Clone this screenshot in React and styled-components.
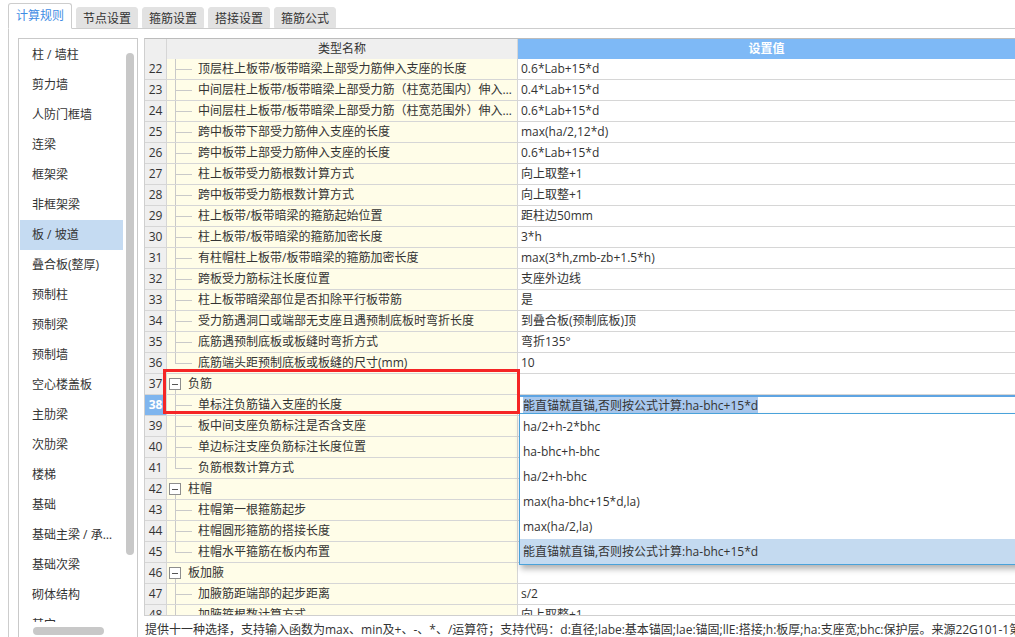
import React from 'react'
import styled, { createGlobalStyle } from 'styled-components'

const GlobalStyle = createGlobalStyle`
    body {
        margin: 0;
        background: #fff;
        font-family: "Open Sans", "Noto Sans CJK SC", sans-serif;
        font-size: 12px;
        color: #333;
    }
`

const tabs = ['计算规则', '节点设置', '箍筋设置', '搭接设置', '箍筋公式']

const sideItems = [
    '柱 / 墙柱', '剪力墙', '人防门框墙', '连梁', '框架梁', '非框架梁', '板 / 坡道',
    '叠合板(整厚)', '预制柱', '预制梁', '预制墙', '空心楼盖板', '主肋梁', '次肋梁',
    '楼梯', '基础', '基础主梁 / 承台梁', '基础次梁', '砌体结构', '其它'
]

const rows = [
    { n: 22, name: '顶层柱上板带/板带暗梁上部受力筋伸入支座的长度', value: '0.6*Lab+15*d' },
    { n: 23, name: '中间层柱上板带/板带暗梁上部受力筋（柱宽范围内）伸入支座的长度', value: '0.4*Lab+15*d' },
    { n: 24, name: '中间层柱上板带/板带暗梁上部受力筋（柱宽范围外）伸入支座的长度', value: '0.6*Lab+15*d' },
    { n: 25, name: '跨中板带下部受力筋伸入支座的长度', value: 'max(ha/2,12*d)' },
    { n: 26, name: '跨中板带上部受力筋伸入支座的长度', value: '0.6*Lab+15*d' },
    { n: 27, name: '柱上板带受力筋根数计算方式', value: '向上取整+1' },
    { n: 28, name: '跨中板带受力筋根数计算方式', value: '向上取整+1' },
    { n: 29, name: '柱上板带/板带暗梁的箍筋起始位置', value: '距柱边50mm' },
    { n: 30, name: '柱上板带/板带暗梁的箍筋加密长度', value: '3*h' },
    { n: 31, name: '有柱帽柱上板带/板带暗梁的箍筋加密长度', value: 'max(3*h,zmb-zb+1.5*h)' },
    { n: 32, name: '跨板受力筋标注长度位置', value: '支座外边线' },
    { n: 33, name: '柱上板带暗梁部位是否扣除平行板带筋', value: '是' },
    { n: 34, name: '受力筋遇洞口或端部无支座且遇预制底板时弯折长度', value: '到叠合板(预制底板)顶' },
    { n: 35, name: '底筋遇预制底板或板缝时弯折方式', value: '弯折135°' },
    { n: 36, name: '底筋端头距预制底板或板缝的尺寸(mm)', value: '10', kind: 'last' },
    { n: 37, name: '负筋', value: '', kind: 'group' },
    { n: 38, name: '单标注负筋锚入支座的长度', value: '能直锚就直锚,否则按公式计算:ha-bhc+15*d', selected: true },
    { n: 39, name: '板中间支座负筋标注是否含支座', value: '' },
    { n: 40, name: '单边标注支座负筋标注长度位置', value: '' },
    { n: 41, name: '负筋根数计算方式', value: '', kind: 'last' },
    { n: 42, name: '柱帽', value: '', kind: 'group' },
    { n: 43, name: '柱帽第一根箍筋起步', value: '' },
    { n: 44, name: '柱帽圆形箍筋的搭接长度', value: '' },
    { n: 45, name: '柱帽水平箍筋在板内布置', value: '', kind: 'last' },
    { n: 46, name: '板加腋', value: '', kind: 'group' },
    { n: 47, name: '加腋筋距端部的起步距离', value: 's/2' },
    { n: 48, name: '加腋箍根数计算方式', value: '向上取整+1' },
]

const options = [
    'ha/2+h-2*bhc',
    'ha-bhc+h-bhc',
    'ha/2+h-bhc',
    'max(ha-bhc+15*d,la)',
    'max(ha/2,la)',
    '能直锚就直锚,否则按公式计算:ha-bhc+15*d',
]

const App = () => {
    return (
        <Page>
            <GlobalStyle />
            <TabBar>
                {tabs.map((t, i) => (
                    <Tab key={t} active={i === 0}>{t}</Tab>
                ))}
            </TabBar>

            <Pane>
                <SideBox>
                    <ListArea>
                        <ItemList>
                            {sideItems.map(item => (
                                <SideItem key={item} selected={item === '板 / 坡道'}>{item}</SideItem>
                            ))}
                        </ItemList>
                        <VTrack><VThumb /></VTrack>
                    </ListArea>
                    <HTrack><HThumb /></HTrack>
                </SideBox>

                <Main>
                    <TableWrap>
                        <HeadRow>
                            <NumHead />
                            <NameHead>类型名称</NameHead>
                            <ValueHead>设置值</ValueHead>
                        </HeadRow>
                        {rows.map(r => (
                            <Row key={r.n}>
                                <NumCell selected={r.selected}>{r.n}</NumCell>
                                {r.kind === 'group' ? (
                                    <NameCell group>
                                        <ToggleCol><Toggle /></ToggleCol>
                                        <GroupText>{r.name}</GroupText>
                                    </NameCell>
                                ) : (
                                    <NameCell>
                                        <Branch last={r.kind === 'last'} />
                                        <NameText>{r.name}</NameText>
                                    </NameCell>
                                )}
                                <ValueCell>
                                    {r.selected ? (
                                        <>
                                            <Editor><Picked>{r.value}</Picked></Editor>
                                            <Dropdown>
                                                {options.map((o, i) => (
                                                    <Option key={o} active={i === options.length - 1}>{o}</Option>
                                                ))}
                                            </Dropdown>
                                        </>
                                    ) : r.value}
                                </ValueCell>
                            </Row>
                        ))}
                    </TableWrap>
                    <Status>
                        提供十一种选择，支持输入函数为max、min及+、-、*、/运算符；支持代码：d:直径;labe:基本锚固;lae:锚固;llE:搭接;h:板厚;ha:支座宽;bhc:保护层。来源22G101-1第2-54页
                    </Status>
                </Main>
            </Pane>

            <RedMark />
        </Page>
    )
}

// Styled Components

const Page = styled.div`
    position: relative;
    width: 1015px;
    height: 637px;
    overflow: hidden;
`

const TabBar = styled.div`
    display: flex;
    align-items: flex-end;
    gap: 4px;
    height: 28px;
    margin-left: 8px;
    border-bottom: 1px solid #cdcdcd;
`

const Tab = styled.div`
    box-sizing: border-box;
    height: ${p => p.active ? '26px' : '21px'};
    padding: 0 ${p => p.active ? '7px' : '6px'};
    margin-bottom: ${p => p.active ? '-1px' : '0'};
    line-height: ${p => p.active ? '24px' : '21px'};
    background: ${p => p.active ? '#fff' : '#e2e2e2'};
    color: ${p => p.active ? '#3f8de4' : '#333'};
    border: 1px solid ${p => p.active ? '#cdcdcd' : '#e2e2e2'};
    border-bottom-color: ${p => p.active ? '#fff' : '#e2e2e2'};
    border-radius: 3px 3px 0 0;
    white-space: nowrap;
`

const Pane = styled.div`
    display: flex;
    align-items: flex-start;
    gap: 6px;
    margin-left: 8px;
    padding: 9px 0 0 9px;
    border-left: 1px solid #cdcdcd;
    height: 640px;
`

const SideBox = styled.div`
    flex: none;
    width: 120px;
    height: 620px;
    box-sizing: border-box;
    border: 1px solid #c9c9c9;
    background: #fff;
    overflow: hidden;
`

const ListArea = styled.div`
    display: flex;
    height: 583px;
    overflow: hidden;
`

const ItemList = styled.div`
    width: 103px;
    margin-left: 1px;
    padding-top: 1px;
`

const SideItem = styled.div`
    height: 30px;
    line-height: 30px;
    padding-left: 12px;
    white-space: nowrap;
    overflow: hidden;
    text-overflow: ellipsis;
    background: ${p => p.selected ? '#c5dbf2' : 'transparent'};
    color: #333;
`

const VTrack = styled.div`
    width: 8px;
    margin-left: 3px;
    padding-top: 14px;
`

const VThumb = styled.div`
    width: 8px;
    height: 502px;
    border-radius: 4px;
    background: #c8c8c8;
`

const HTrack = styled.div`
    height: 15px;
    padding: 5px 0 0 14px;
    box-sizing: border-box;
`

const HThumb = styled.div`
    width: 71px;
    height: 8px;
    border-radius: 4px;
    background: #c8c8c8;
`

const Main = styled.div`
    flex: 1;
    min-width: 0;
    display: flex;
    flex-direction: column;
`

const TableWrap = styled.div`
    height: 578px;
    box-sizing: border-box;
    border-top: 1px solid #bcbcbc;
    border-bottom: 1px solid #cfcfcf;
    border-left: 1px solid #cfcfcf;
    overflow: hidden;
`

const HeadRow = styled.div`
    display: grid;
    grid-template-columns: 22px 351px 1fr;
    height: 20px;
    line-height: 20px;
`

const NumHead = styled.div`
    background: #efefef;
    border-right: 1px solid #d6d6d6;
`

const NameHead = styled.div`
    background: #efefef;
    border-right: 1px solid #d6d6d6;
    text-align: center;
    color: #333;
`

const ValueHead = styled.div`
    box-sizing: border-box;
    background: #7eb9f6;
    border-bottom: 1px solid #68a8ee;
    color: #fff;
    font-weight: 700;
    text-align: center;
`

const Row = styled.div`
    display: grid;
    grid-template-columns: 22px 351px 1fr;
    height: 21px;
`

const NumCell = styled.div`
    box-sizing: border-box;
    border-right: 1px solid #d6d6d6;
    border-bottom: 1px solid #d6d6d6;
    background: ${p => p.selected ? '#7fb5ee' : '#efefef'};
    color: ${p => p.selected ? '#fff' : '#333'};
    font-weight: ${p => p.selected ? 700 : 400};
    line-height: 20px;
    text-align: center;
`

const NameCell = styled.div`
    box-sizing: border-box;
    display: flex;
    align-items: stretch;
    min-width: 0;
    padding-left: ${p => p.group ? '2px' : '8px'};
    background: #fffde8;
    border-right: 1px solid #d6d6d6;
    border-bottom: 1px solid #d6d6d6;
    line-height: 20px;
`

const Branch = styled.div`
    flex: none;
    width: 17px;
    background:
        linear-gradient(#c9c9c9, #c9c9c9) left top / 1px ${p => p.last ? '50%' : '100%'} no-repeat,
        linear-gradient(#c9c9c9, #c9c9c9) left 10px / 17px 1px no-repeat;
`

const NameText = styled.div`
    margin-left: 6px;
    white-space: nowrap;
    overflow: hidden;
    text-overflow: ellipsis;
    padding-right: 2px;
`

const ToggleCol = styled.div`
    flex: none;
    width: 12px;
    display: flex;
    align-items: center;
    background: linear-gradient(#c9c9c9, #c9c9c9) 6px 100% / 1px 50% no-repeat;
`

const Toggle = styled.div`
    box-sizing: border-box;
    width: 12px;
    height: 12px;
    border: 1px solid #8d8d8d;
    background: linear-gradient(#555, #555) center / 6px 1px no-repeat, #fff;
`

const GroupText = styled.div`
    margin-left: 7px;
    white-space: nowrap;
`

const ValueCell = styled.div`
    position: relative;
    box-sizing: border-box;
    padding-left: 3px;
    border-bottom: 1px solid #d6d6d6;
    background: #fff;
    line-height: 20px;
    white-space: nowrap;
    overflow: visible;
`

const Editor = styled.div`
    box-sizing: border-box;
    height: 20px;
    margin-left: -2px;
    padding-left: 3px;
    border-top: 2px solid #5ea4e2;
    border-left: 1px solid #5ea4e2;
    line-height: 18px;
`

const Picked = styled.span`
    background: #a8c8ee;
    color: #333;
`

const Dropdown = styled.div`
    position: absolute;
    top: 18px;
    left: 1px;
    width: 520px;
    z-index: 2;
    background: #fff;
    border: 1px solid #4aa2da;
    box-shadow: 2px 4px 6px rgba(0, 0, 0, 0.3);
`

const Option = styled.div`
    height: 25px;
    line-height: 25px;
    padding-left: 3px;
    background: ${p => p.active ? '#c4daf0' : '#fff'};
    color: #333;
`

const Status = styled.div`
    padding: 6px 0 0 1px;
    line-height: 16px;
    white-space: nowrap;
    overflow: hidden;
    color: #333;
`

const RedMark = styled.div`
    position: absolute;
    left: 163px;
    top: 369px;
    width: 357px;
    height: 45px;
    box-sizing: border-box;
    border: 3px solid #f52525;
    z-index: 3;
    pointer-events: none;
`

export default App
